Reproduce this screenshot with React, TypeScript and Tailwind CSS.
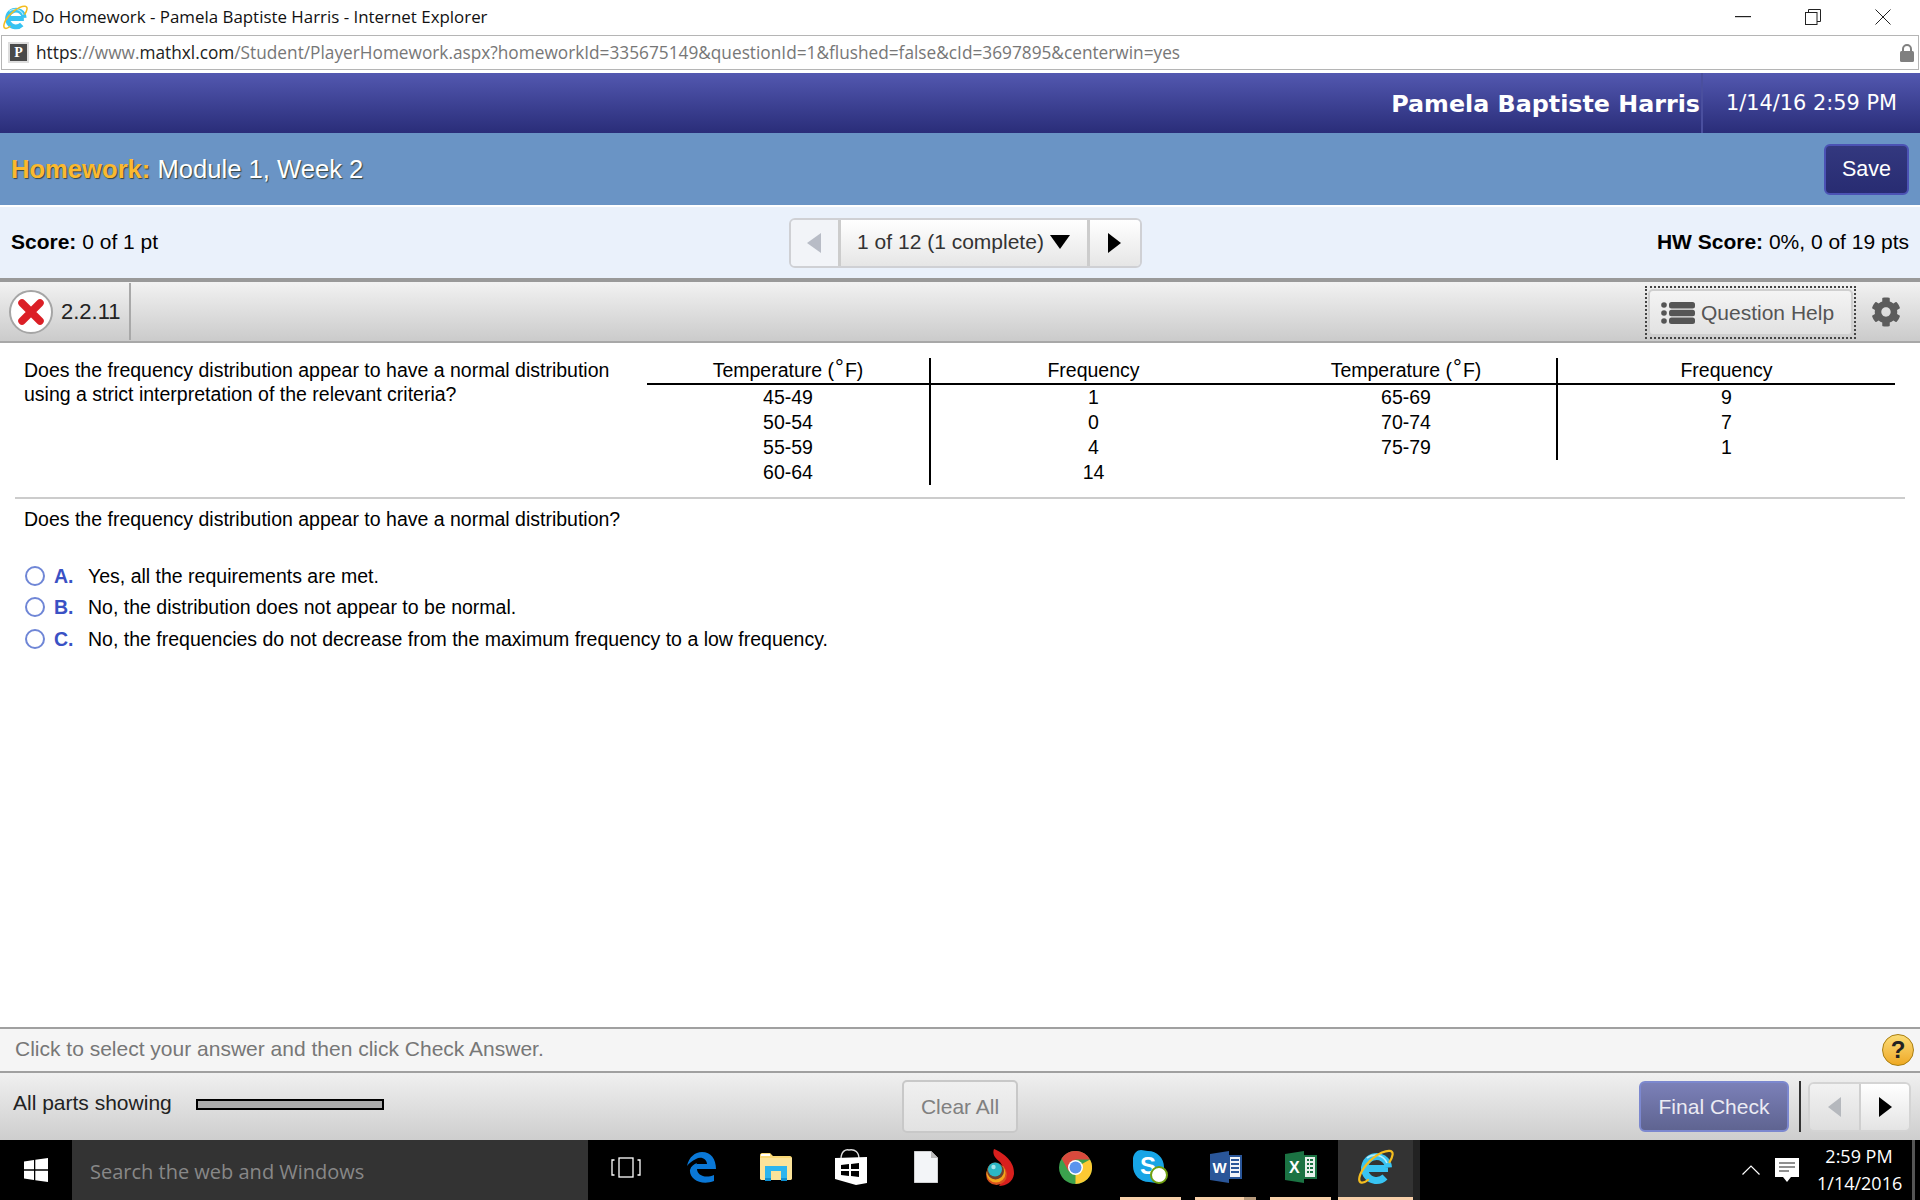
import React from "react";
import { FaCog } from "react-icons/fa";

const Tri = ({ dir, color, w, h }: { dir: "l" | "r" | "d"; color: string; w: number; h: number }) => (
  <svg width={w} height={h} viewBox="0 0 10 10" preserveAspectRatio="none">
    <path d={dir === "l" ? "M10 0V10L0 5Z" : dir === "r" ? "M0 0V10L10 5Z" : "M0 0H10L5 10Z"} fill={color} />
  </svg>
);

const IE = ({ size }: { size: number }) => (
  <svg width={size} height={size} viewBox="0 0 36 36" fill="none">
    <path d="M30 19.500H8M30.500 18.500A12 12 0 1 0 27 28" stroke="#38c3f2" strokeWidth="7" />
    <path d="M29 14A13 13 0 0 0 9 9" stroke="#b4ecfb" strokeWidth="1.600" />
    <path d="M10 31C5 35 0 35 1.500 28C3 21 12 9 24 3.500C30 1 35.500 1 34.500 6C34 9 33 11 31.500 13" stroke="#f4bd1f" strokeWidth="2.200" strokeLinecap="round" />
  </svg>
);

const Edge = () => (
  <svg width="30" height="32" viewBox="0 0 30 32" fill="none">
    <path d="M1 15C3 6 9 1 16 1C25 1 30 8 30 18H11C11 24 19 28 28 24V30C15 35 3 28 4 19C5 15 8 13 11 12C10 14 11 13 11 13H21C21 8 15 5 10 8C6 10 3 12 1 15Z" fill="#0a78d7" />
  </svg>
);

const Folder = () => (
  <svg width="32" height="28" viewBox="0 0 32 28">
    <path d="M0 2C0 1 1 0 2 0H10L13 3H30C31 3 32 4 32 5V25C32 26 31 27 30 27H2C1 27 0 26 0 25Z" fill="#f8d775" />
    <rect x="1" y="1" width="9" height="2" fill="#fff" />
    <path d="M0 5H32V25C32 26 31 27 30 27H2C1 27 0 26 0 25Z" fill="#fbe39a" />
    <path d="M5 27V13H27V27H21V18H11V27Z" fill="#2cb5ee" />
    <rect x="5" y="25" width="6" height="3" fill="#0f8fd0" />
    <rect x="21" y="25" width="6" height="3" fill="#0f8fd0" />
  </svg>
);

const Store = () => (
  <svg width="32" height="37" viewBox="0 0 32 37">
    <path d="M6 10C6 2 11 0 14 1C20 0 24 3 24 10" fill="none" stroke="#ddd" strokeWidth="1.400" />
    <path d="M0 9L32 8V34L21 36L0 30Z" fill="#fff" />
    <path d="M6 16L14 15V20H6ZM16 15L24 14V20H16ZM6 22H14V27L6 26ZM16 22H24V28L16 27Z" fill="#000" />
  </svg>
);

const FileIcon = () => (
  <svg width="24" height="32" viewBox="0 0 24 32">
    <path d="M0 0H17L24 7V32H0Z" fill="#f3f5f8" stroke="#999" strokeWidth="0.800" />
    <path d="M17 0V7H24Z" fill="#bbb" />
  </svg>
);

const Torch = () => (
  <svg width="29" height="37" viewBox="0 0 29 37">
    <path d="M8 0C18 4 29 13 28 25C27 33 20 37 13 37C20 29 19 19 14 13C9 9 6 5 8 0Z" fill="#d81f1d" />
    <circle cx="10.500" cy="25.500" r="10.500" fill="#d9501d" />
    <circle cx="10" cy="24" r="9.500" fill="#f3a51c" />
    <circle cx="9.500" cy="22" r="8.500" fill="#70402a" />
    <circle cx="9" cy="20.500" r="7" fill="#2bb7c4" />
    <circle cx="7.500" cy="18" r="2.200" fill="#a6e6ea" />
  </svg>
);

const Chrome = () => (
  <svg width="33" height="33" viewBox="0 0 33 33">
    <circle cx="16.500" cy="16.500" r="16.500" fill="#3ba14d" />
    <path d="M16.500 16.500L16.500 33A16.500 16.500 0 0 0 31 8.500Z" fill="#fcc933" />
    <path d="M2.600 7.600A16.500 16.500 0 0 1 31 8.500H16.500L9.500 20Z" fill="#d94a3d" />
    <circle cx="16.500" cy="16.500" r="7.500" fill="#fff" />
    <circle cx="16.500" cy="16.500" r="6" fill="#5a94ee" />
  </svg>
);

const Excel = () => (
  <svg width="32" height="32" viewBox="0 0 32 32">
    <path d="M0 3L19 0V32L0 29Z" fill="#1b7343" />
    <path d="M19 4H32V28H19Z" fill="#1b7343" />
    <path d="M20 6H30V26H20Z" fill="#e8f1ec" />
    <path d="M22 8H24V10H22ZM25 8H28V10H25ZM22 12H24V14H22ZM25 12H28V14H25ZM22 16H24V18H22ZM25 16H28V18H25ZM22 20H24V22H22ZM25 20H28V22H25Z" fill="#1b7343" />
    <text x="4" y="21.500" fontFamily="'Liberation Sans',sans-serif" fontWeight="700" fontSize="16" fill="#fff">X</text>
  </svg>
);

const Word = () => (
  <svg width="32" height="32" viewBox="0 0 32 32">
    <path d="M0 3L19 0V32L0 29Z" fill="#2a5699" />
    <path d="M19 4H32V28H19Z" fill="#2a5699" />
    <path d="M20 6H30V26H20Z" fill="#f1f3f8" />
    <path d="M21 8H29V10H21ZM21 12H29V14H21ZM21 16H29V18H21ZM21 20H29V22H21Z" fill="#2a5699" />
    <text x="2.500" y="21.500" fontFamily="'Liberation Sans',sans-serif" fontWeight="700" fontSize="15" fill="#fff">W</text>
  </svg>
);

const Skype = () => (
  <svg width="36" height="34" viewBox="0 0 36 34">
    <path d="M8 0C11 0 12 1 15 1C24 1 31 8 31 17C31 20 32 21 32 24C32 30 27 33 23 33C20 33 19 32 16 32C7 32 0 25 0 16C0 13 -1 12 0 8C1 3 4 0 8 0Z" fill="#17a5e6" />
    <text x="7" y="24" fontFamily="'Liberation Sans',sans-serif" fontWeight="700" fontSize="24" fill="#fff">S</text>
    <circle cx="26" cy="25" r="8" fill="#fff" stroke="#6f9f10" strokeWidth="2" />
  </svg>
);

const slots: { node: React.ReactNode; bar?: string; active?: boolean }[] = [
  {
    node: (
      <svg width="30" height="21" viewBox="0 0 30 21" fill="none" stroke="#fff" strokeWidth="1.300">
        <rect x="8" y="1" width="14" height="19" />
        <path d="M3.500 3H1V18H3.500M26.500 3H29V18H26.500" />
      </svg>
    ),
  },
  { node: <Edge /> },
  { node: <Folder /> },
  { node: <Store /> },
  { node: <FileIcon /> },
  { node: <Torch /> },
  { node: <Chrome /> },
  { node: <Skype />, bar: "peach" },
  { node: <Word />, bar: "tan" },
  { node: <Excel />, bar: "peach" },
  { node: <IE size={36} />, bar: "full", active: true },
];

const rows = [
  ["45-49", "1", "65-69", "9"],
  ["50-54", "0", "70-74", "7"],
  ["55-59", "4", "75-79", "1"],
  ["60-64", "14", "", ""],
];

const options = [
  ["A.", "Yes, all the requirements are met."],
  ["B.", "No, the distribution does not appear to be normal."],
  ["C.", "No, the frequencies do not decrease from the maximum frequency to a low frequency."],
];

const Deg = () => <sup className="text-[22px] leading-[0] top-[-2px] px-[1px]">°</sup>;

export default function App() {
  return (
    <div className="w-[1920px] h-[1200px] flex flex-col overflow-hidden bg-white text-[19.500px] leading-[24px] text-black font-['Liberation_Sans',sans-serif]">
      {/* Title bar */}
      <div className="h-[35px] flex items-center pl-[3px] pb-[1px] shrink-0">
        <IE size={25} />
        <span className="ml-[4px] text-[16.900px] text-[#111] font-['Open_Sans',sans-serif]">Do Homework - Pamela Baptiste Harris - Internet Explorer</span>
        <div className="ml-auto flex items-center">
          <svg width="16" height="2" viewBox="0 0 16 2" className="mr-[54px]"><rect width="16" height="1.200" fill="#222" /></svg>
          <svg width="16" height="16" viewBox="0 0 16 16" fill="none" stroke="#222" className="mr-[54px]"><rect x="0.500" y="3.500" width="11.500" height="12" /><path d="M3.500 3.500V0.500H15.500V12.500H12" /></svg>
          <svg width="16" height="16" viewBox="0 0 16 16" fill="none" stroke="#222" className="mr-[29px]"><path d="M0.500 0.500L15.500 15.500M15.500 0.500L0.500 15.500" /></svg>
        </div>
      </div>

      {/* Address bar */}
      <div className="h-[35px] mx-[1px] border border-[#b5b5b5] flex items-center pl-[6px] pr-[4px] shrink-0">
        <div className="w-[21px] h-[21px] bg-[#4a4a4a] border-[2px] border-[#ddd] text-white text-[14px] leading-[17px] text-center font-bold font-['Liberation_Serif',serif]">P</div>
        <span className="ml-[7px] text-[17.250px] text-[#777] font-['Open_Sans',sans-serif] whitespace-nowrap">
          <span className="text-[#222]">https</span>://www.<span className="text-[#222]">mathxl.com</span>/Student/PlayerHomework.aspx?homeworkId=335675149&amp;questionId=1&amp;flushed=false&amp;cId=3697895&amp;centerwin=yes
        </span>
        <svg width="14" height="18" viewBox="0 0 14 18" className="ml-auto">
          <path d="M3 8V5A4 4 0 0 1 11 5V8" fill="none" stroke="#808080" strokeWidth="2" />
          <rect y="7" width="14" height="11" rx="1.500" fill="#808080" />
        </svg>
      </div>

      {/* User band */}
      <div className="mt-[3px] h-[60px] shrink-0 flex justify-end bg-linear-to-b from-[#5358b0] to-[#2a2d79] text-white font-['DejaVu_Sans',sans-serif]">
        <div className="flex items-center pt-[2px] pr-[1px] border-r-[2px] border-[#4a4f9e] font-bold text-[23.800px]">Pamela Baptiste Harris</div>
        <div className="flex items-center pl-[23px] pr-[23px] text-[20.850px]">1/14/16 2:59 PM</div>
      </div>

      {/* Homework row */}
      <div className="h-[72px] shrink-0 bg-[#6a94c5] flex items-center justify-between pl-[11px] pr-[11px]">
        <div className="text-[25.600px] text-white [text-shadow:1px_1px_1px_#344]">
          <span className="font-bold text-[#fbb92f]">Homework:</span> Module 1, Week 2
        </div>
        <button className="w-[85px] h-[51px] rounded-[6px] border-[2px] border-[#4b52b4] bg-linear-to-b from-[#33387f] to-[#282c72] text-white text-[21.500px]">Save</button>
      </div>

      {/* Score row */}
      <div className="mt-[2px] h-[71px] shrink-0 bg-[#eaf1fb] flex items-center justify-between pl-[11px] pr-[11px] text-[21px]">
        <div className="w-[400px] pb-[2px]"><b>Score:</b> 0 of 1 pt</div>
        <div className="flex h-[50px] ml-[10px] rounded-[6px] border-[2px] border-[#cfd0d4] overflow-hidden">
          <div className="w-[47px] bg-[#f2f4f8] flex items-center justify-center"><Tri dir="l" color="#b8bcc6" w={14} h={20} /></div>
          <div className="w-[252px] pb-[2px] border-x-[3px] border-[#cccccc] bg-linear-to-b from-white to-[#e6e6e6] flex items-center justify-center gap-[6px] text-[#333]">
            1 of 12 (1 complete)
            <Tri dir="d" color="#000" w={20} h={14} />
          </div>
          <div className="w-[50px] bg-linear-to-b from-white to-[#e6e6e6] flex items-center justify-center"><Tri dir="r" color="#000" w={13} h={20} /></div>
        </div>
        <div className="w-[400px] pb-[2px] text-right"><b>HW Score:</b> 0%, 0 of 19 pts</div>
      </div>

      {/* Question toolbar */}
      <div className="h-[65px] shrink-0 border-t-[4px] border-b-[2px] border-t-[#999999] border-b-[#a8a8a8] bg-linear-to-b from-[#f2f2f2] to-[#cbcbcb] flex items-center">
        <div className="ml-[9px] w-[44px] h-[44px] rounded-full bg-white border-[2px] border-[#a5a5a5] flex items-center justify-center">
          <svg width="28" height="28" viewBox="0 0 28 28"><path d="M5 5L23 23M23 5L5 23" stroke="#db1f26" strokeWidth="7.500" strokeLinecap="round" /></svg>
        </div>
        <span className="ml-[8px] text-[22px] text-[#222]">2.2.11</span>
        <div className="ml-[8px] h-[57px] w-[2px] bg-[#a8a8a8]" />
        <div className="ml-auto mr-[15px] mt-[2px] w-[211px] h-[53px] border-[2px] border-dotted border-[#444] p-[1px]">
          <div className="w-full h-full rounded-[5px] border-[2px] border-[#cfcfcf] bg-linear-to-b from-[#f4f4f4] to-[#e2e2e2] flex items-center pl-[11px] gap-[6px] text-[#555] text-[21px]">
            <svg width="34" height="22" viewBox="0 0 34 22" fill="#555">
              <circle cx="3" cy="3" r="2.800" /><circle cx="3" cy="11" r="2.800" /><circle cx="3" cy="19" r="2.800" />
              <rect x="8" y="0" width="26" height="6.600" rx="2.500" /><rect x="8" y="7.700" width="26" height="6.600" rx="2.500" /><rect x="8" y="15.400" width="26" height="6.600" rx="2.500" />
            </svg>
            Question Help
          </div>
        </div>
        <FaCog className="mr-[19px] text-[#5c5c5c] text-[30px]" />
      </div>

      {/* Content */}
      <div className="flex-1 min-h-0 pt-[15px]">
        <div className="flex pl-[24px]">
          <p className="w-[623px] shrink-0">Does the frequency distribution appear to have a normal distribution using a strict interpretation of the relevant criteria?</p>
          <table className="table-fixed w-[1248px] border-collapse text-center">
            <colgroup>
              <col className="w-[283px]" /><col className="w-[326px]" /><col className="w-[301px]" /><col className="w-[338px]" />
            </colgroup>
            <thead>
              <tr className="h-[26px] border-b-[2px] border-black">
                <th className="font-normal pb-[1px] border-r-[2px] border-black">Temperature (<Deg />F)</th>
                <th className="font-normal pb-[1px]">Frequency</th>
                <th className="font-normal pb-[1px] border-r-[2px] border-black">Temperature (<Deg />F)</th>
                <th className="font-normal pb-[1px]">Frequency</th>
              </tr>
            </thead>
            <tbody>
              {rows.map((r) => (
                <tr key={r[0]} className="h-[25px]">
                  <td className="border-r-[2px] border-black p-0 pb-[1px]">{r[0]}</td>
                  <td className="p-0 pb-[1px]">{r[1]}</td>
                  <td className={r[2] ? "border-r-[2px] border-black p-0 pb-[1px]" : "p-0 pb-[1px]"}>{r[2]}</td>
                  <td className="p-0 pb-[1px]">{r[3]}</td>
                </tr>
              ))}
            </tbody>
          </table>
        </div>
        <div className="mt-[12px] mx-[15px] h-[2px] bg-[#cccccc]" />
        <p className="mt-[8px] ml-[24px]">Does the frequency distribution appear to have a normal distribution?</p>
        <div className="mt-[29px] ml-[25px]">
          {options.map(([l, t]) => (
            <div key={l} className="h-[31.500px] flex items-center">
              <span className="w-[20px] h-[20px] rounded-full border-[2px] border-[#6f86d6] bg-white" />
              <b className="ml-[9px] w-[34px] text-[#3a51c4]">{l}</b>
              <span>{t}</span>
            </div>
          ))}
        </div>
      </div>

      {/* Hint */}
      <div className="h-[46px] shrink-0 border-y-[2px] border-[#a0a0a0] bg-[#f5f5f5] flex items-center pl-[15px] pr-[6px] text-[21px] text-[#777]">
        <span className="pb-[2px]">Click to select your answer and then click Check Answer.</span>
        <div className="ml-auto w-[32px] h-[32px] rounded-full border border-[#a97e10] bg-linear-to-b from-[#fbdc74] to-[#eea91f] text-center text-[#222] font-bold text-[24px] leading-[30px]">?</div>
      </div>

      {/* Footer */}
      <div className="h-[67px] shrink-0 bg-linear-to-b from-[#f0f0f0] to-[#cecece] flex items-center text-[21px]">
        <div className="w-[902px] flex items-center pl-[13px] text-[#222] mt-[-7px]">
          All parts showing
          <div className="ml-[24px] w-[188px] h-[11px] border-[2px] border-black bg-[#acacac] mt-[2px]" />
        </div>
        <button className="w-[116px] h-[53px] rounded-[5px] border-[2px] border-[#c8c8c8] bg-linear-to-b from-[#f0f0f0] to-[#e2e2e2] text-[#808080]">Clear All</button>
        <div className="ml-auto flex items-center pr-[9px]">
          <button className="w-[150px] h-[51px] rounded-[6px] border-[2px] border-[#7c88cf] bg-linear-to-b from-[#7b80b8] to-[#5f6491] text-[#ebebf3]">Final Check</button>
          <div className="ml-[10px] w-[2px] h-[51px] bg-[#333]" />
          <div className="ml-[7px] flex h-[50px] w-[103px] rounded-[6px] border-[2px] border-[#d4d4d4] overflow-hidden">
            <div className="w-[49px] flex items-center justify-center bg-linear-to-b from-[#f2f2f2] to-[#dedede]"><Tri dir="l" color="#b5b8bd" w={13} h={20} /></div>
            <div className="flex-1 border-l-[2px] border-[#cfcfcf] flex items-center justify-center bg-linear-to-b from-white to-[#e4e4e4]"><Tri dir="r" color="#000" w={13} h={20} /></div>
          </div>
        </div>
      </div>

      {/* Taskbar */}
      <div className="h-[60px] shrink-0 bg-black flex">
        <div className="w-[72px] flex items-center justify-center">
          <svg width="24" height="24" viewBox="0 0 24 24" fill="#fff"><path d="M0 3.500L10 2V11.300H0ZM11.300 1.800L24 0V11.300H11.300ZM0 12.700H10V22L0 20.500ZM11.300 12.700H24V24L11.300 22.200Z" /></svg>
        </div>
        <div className="w-[516px] bg-[#333333] flex items-center pl-[18px] pt-[3px] text-[#888] text-[20px] font-['Open_Sans',sans-serif]">Search the web and Windows</div>
        {slots.map((s, i) => (
          <div key={i} className={s.active ? "relative w-[75px] bg-[#333333] flex items-center justify-center" : "relative w-[75px] flex items-center justify-center"}>
            <div className="mt-[-6px] flex items-center justify-center">{s.node}</div>
            {s.bar === "peach" && <span className="absolute bottom-0 left-[7px] w-[61px] h-[3px] bg-[#f7cfa9]" />}
            {s.bar === "tan" && <span className="absolute bottom-0 left-[7px] w-[61px] h-[3px] bg-linear-to-r from-[#f7cfa9] from-80% to-[#b79a7c] to-80%" />}
            {s.bar === "full" && <span className="absolute bottom-0 left-0 w-full h-[3px] bg-[#f7cfa9]" />}
          </div>
        ))}
        <div className="w-[7px] bg-[#222]" />
        <div className="flex-1 flex items-center justify-end text-white">
          <svg width="18" height="10" viewBox="0 0 18 10" fill="none" stroke="#fff" strokeWidth="1.200"><path d="M0.500 9.500L9 1L17.500 9.500" /></svg>
          <svg width="24" height="25" viewBox="0 0 24 25" fill="#fff" className="ml-[15px]">
            <path d="M0 0H24V19H16L12 24L8 19H0Z" />
            <path d="M4 5H20M4 9H20M4 13H14" stroke="#222" strokeWidth="1.200" />
          </svg>
          <div className="ml-[18px] w-[84px] text-center text-[18px] leading-[27px] font-['Open_Sans',sans-serif] whitespace-nowrap">
            2:59 PM<br />1/14/2016
          </div>
          <div className="ml-[11px] mr-[5px] w-[3px] h-full bg-[#555]" />
        </div>
      </div>
    </div>
  );
}
